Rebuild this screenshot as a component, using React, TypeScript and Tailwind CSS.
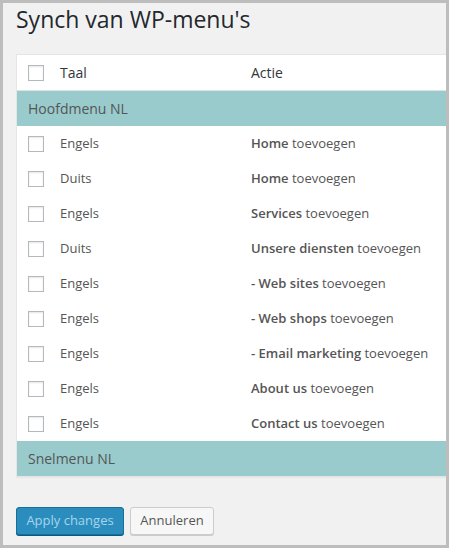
import React from "react";

const rows: { lang: string; bold: string }[] = [
  { lang: "Engels", bold: "Home" },
  { lang: "Duits", bold: "Home" },
  { lang: "Engels", bold: "Services" },
  { lang: "Duits", bold: "Unsere diensten" },
  { lang: "Engels", bold: "- Web sites" },
  { lang: "Engels", bold: "- Web shops" },
  { lang: "Engels", bold: "- Email marketing" },
  { lang: "Engels", bold: "About us" },
  { lang: "Engels", bold: "Contact us" },
];

function Box() {
  return (
    <span className="block w-4 h-4 shrink-0 border border-[#b4b9be] bg-white shadow-[inset_0_1px_2px_rgba(0,0,0,0.1)]" />
  );
}

export default function App() {
  return (
    <div
      className="w-[449px] h-[548px] border-[3px] border-[#bdbdbd] bg-[#f1f1f1] overflow-hidden text-[13px] text-[#555]"
      style={{ fontFamily: '"Open Sans", "Noto Sans", sans-serif' }}
    >
      <div className="pl-[13px] pt-px">
        <h1 className="text-[23px] leading-[29px] font-normal text-[#23282d] pt-[1px]">
          Synch van WP-menu's
        </h1>
        <div className="mt-[20px] w-[460px] border border-[#e5e5e5] bg-white shadow-[0_1px_1px_rgba(0,0,0,0.04)]">
          <div className="h-[36px] flex items-center border-b border-[#e1e1e1] pl-[11px] text-[14px] text-[#32373c]">
            <Box />
            <span className="ml-4 w-[191px]">Taal</span>
            <span>Actie</span>
          </div>
          <div className="h-[35px] flex items-center bg-[#99cbcc] pl-[11px] text-[14px] text-[#555]">
            Hoofdmenu NL
          </div>
          {rows.map((r, i) => (
            <div key={i} className="h-[35px] flex items-center pl-[11px]">
              <Box />
              <span className="ml-4 w-[191px]">{r.lang}</span>
              <span>
                <span className="font-semibold">{r.bold}</span> toevoegen
              </span>
            </div>
          ))}
          <div className="h-[35px] flex items-center bg-[#99cbcc] pl-[11px] text-[14px] text-[#555]">
            Snelmenu NL
          </div>
        </div>
        <div className="mt-[30px] flex gap-[6px]">
          <button className="h-[28px] w-[108px] rounded-[3px] border border-[#166f99] bg-[#2a8dbd] text-[#a8d5ec] text-[13px] shadow-[0_1px_0_#0b5a80]">
            Apply changes
          </button>
          <button className="h-[28px] w-[84px] rounded-[3px] border border-[#cccccc] bg-[#f7f7f7] text-[#555] text-[13px] shadow-[0_1px_0_#ccc]">
            Annuleren
          </button>
        </div>
      </div>
    </div>
  );
}
